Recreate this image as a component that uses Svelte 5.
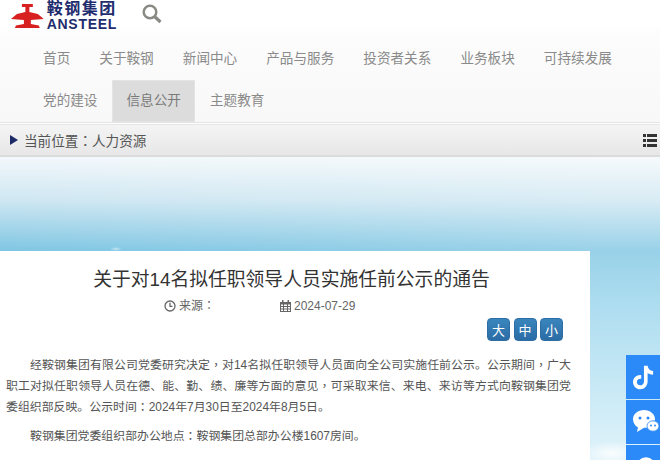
<script>
  const nav = ['首页','关于鞍钢','新闻中心','产品与服务','投资者关系','业务板块','可持续发展','党的建设','信息公开','主题教育'];
</script>

<div class="page">
  <header class="top">
    <div class="logo">
      <svg class="mark" width="36" height="26" viewBox="0 0 36 26">
        <path fill="#d7201f" d="M12 1h11v3h-3.500v5l8.500 2 6 5-13 1v4l8 1.500 1 2.500H5l1-2.500 8-1.500v-4L1 16l6-5 8.500-2V4H12z"/>
      </svg>
      <div class="logotext">
        <span class="cn">鞍钢集团</span>
        <span class="en">ANSTEEL</span>
      </div>
    </div>
    <svg class="search" width="20" height="20" viewBox="0 0 20 20" fill="none" stroke="#8a8a84">
      <circle cx="8" cy="8" r="6.300" stroke-width="2.500"/>
      <path d="M12.500 12.500l6 5.500" stroke-width="3.200"/>
    </svg>
  </header>

  <nav class="nav">
    {#each nav as item, i}
      <span class="item" class:second={i > 6} class:active={item === '信息公开'}>{item}</span>
    {/each}
  </nav>

  <div class="crumb">
    <span class="here"><i class="tri"></i><span>当前位置<span class="mid">：</span>人力资源</span></span>
    <svg width="14" height="13" viewBox="0 0 14 13" fill="#333">
      <path d="M0 0h3v3H0zM4 0h10v3H4zM0 5h3v3H0zM4 5h10v3H4zM0 10h3v3H0zM4 10h10v3H4z"/>
    </svg>
  </div>

  <main class="sky">
    <article class="card">
      <h1>关于对14名拟任职领导人员实施任前公示的通告</h1>
      <div class="meta">
        <span class="src">
          <svg width="12" height="12" viewBox="0 0 12 12" fill="none" stroke="#666" stroke-width="1.300">
            <circle cx="6" cy="6" r="5"/><path d="M6 2.800V6.300H8.500"/>
          </svg>
          <span>来源<span class="mid">：</span></span>
        </span>
        <span class="date">
          <svg width="11" height="12" viewBox="0 0 11 12" fill="#666">
            <path d="M0 2h2V0h1.500v2h4V0H9v2h2v10H0zM1 4.500v1.500h2V4.500zM4 4.500v1.500h3V4.500zM8 4.500v1.500h2V4.500zM1 7v1.500h2V7zM4 7v1.500h3V7zM8 7v1.500h2V7zM1 9.500V11h2V9.500zM4 9.500V11h3V9.500zM8 9.500V11h2V9.500z"/>
          </svg>
          2024-07-29
        </span>
      </div>
      <div class="sizes">
        <button>大</button><button>中</button><button>小</button>
      </div>
      <p>
        <span class="ln first">经鞍钢集团有限公司党委研究决定<span class="mid">，</span>对14名拟任职领导人员面向全公司实施任前公示。公示期间<span class="mid">，</span>广大</span>
        <span class="ln">职工对拟任职领导人员在德、能、勤、绩、廉等方面的意见<span class="mid">，</span>可采取来信、来电、来访等方式向鞍钢集团党</span>
        <span class="tail">委组织部反映。公示时间<span class="mid">：</span>2024年7月30日至2024年8月5日。</span>
      </p>
      <p><span class="tail first">鞍钢集团党委组织部办公地点<span class="mid">：</span>鞍钢集团总部办公楼1607房间。</span></p>
    </article>

    <aside class="side">
      <div class="sbtn">
        <svg width="21" height="25" viewBox="0 0 23 26" fill="#fff">
          <path d="M12 0h4c.4 3.300 2.600 5.500 6 5.800v4.200c-2.300 0-4.300-.7-6-1.900v9.400c0 4.700-3.500 8.500-8 8.500S0 22.400 0 18c0-4.800 4.200-8.400 9-7.800v4.400c-2.500-.6-4.800 1-4.800 3.300 0 2.100 1.700 3.700 3.700 3.700 2.200 0 4.100-1.700 4.100-4z"/>
        </svg>
      </div>
      <div class="sbtn">
        <svg width="26" height="24" viewBox="0 0 26 24">
          <path fill="#fff" d="M11 0c6 0 11 4 11 9.200 0 .6 0 1-.2 1.600-3.700-.6-6.800 2-6.800 5.200 0 .6.100 1 .2 1.400-1.400.4-2.800.5-4.200.4L4 22l1-4.500C2 15.800 0 12.700 0 9.200 0 4 5 0 11 0z"/>
          <circle cx="7" cy="8" r="1.500" fill="#2b8af7"/><circle cx="15" cy="8" r="1.500" fill="#2b8af7"/>
          <ellipse cx="20" cy="16" rx="6" ry="5.200" fill="#fff" stroke="#2b8af7" stroke-width=".8"/>
          <circle cx="18" cy="15.500" r="1" fill="#2b8af7"/><circle cx="22" cy="15.500" r="1" fill="#2b8af7"/>
        </svg>
      </div>
      <div class="sbtn">
        <svg width="26" height="24" viewBox="0 0 26 24" fill="none" stroke="#fff" stroke-width="3">
          <path d="M6 8a8 8 0 0 1 14 0"/>
        </svg>
      </div>
    </aside>
  </main>
</div>

<style>
  :global(body) {
    margin: 0;
    overflow: hidden;
    background: #fff;
  }
  .page {
    width: 660px;
    height: 460px;
    overflow: hidden;
    font-family: "Liberation Sans", "Noto Sans CJK SC", sans-serif;
    display: flex;
    flex-direction: column;
  }
  .top {
    height: 36px;
    flex: none;
    display: flex;
    align-items: flex-start;
    padding-left: 10px;
    background: linear-gradient(#fff 24px, #fcfcfc);
  }
  .logo {
    display: flex;
    align-items: flex-start;
    gap: 1px;
    width: 107px;
  }
  .mark {
    margin-top: 3px;
  }
  .logotext {
    display: flex;
    flex-direction: column;
    color: #1f2d6e;
    font-weight: 700;
    line-height: 1;
    padding-top: 1px;
  }
  .cn {
    font-size: 16px;
    letter-spacing: 1.500px;
    height: 16px;
  }
  .en {
    font-size: 14px;
    letter-spacing: 0.700px;
    height: 13px;
    margin-top: 0;
  }
  .search {
    margin: 4px 0 0 25px;
  }
  .nav {
    flex: none;
    display: flex;
    flex-wrap: wrap;
    padding-left: 28.500px;
    background: linear-gradient(#fcfcfc, #f8f8f8);
    height: 86px;
    align-content: flex-start;
    border-bottom: 1px solid #e3e3e3;
  }
  .item {
    padding: 0 14.550px;
    height: 44px;
    line-height: 45px;
    font-size: 13.600px;
    color: #8a8a8a;
    white-space: nowrap;
  }
  .item.second {
    height: 42px;
    line-height: 41px;
  }
  .item.active {
    background: #dcdcdc;
    color: #7a7a7a;
    box-shadow: inset 0 0 0 1px #e4e4e4;
  }
  .crumb {
    flex: none;
    margin-top: 1px;
    height: 33px;
    box-sizing: border-box;
    display: flex;
    align-items: center;
    justify-content: space-between;
    padding: 0 3px 0 10px;
    background: linear-gradient(#f4f4f4, #e7e7e7);
    border-top: 1px solid #e6e6e6;
    border-bottom: 2px solid #dbdbdb;
    font-size: 13.600px;
    color: #555;
  }
  .here {
    display: flex;
    align-items: center;
  }
  .mid {
    font-family: "Noto Sans CJK TC", sans-serif;
    line-height: 0;
  }
  .tri {
    width: 0;
    height: 0;
    margin-right: 6px;
    border-left: 8px solid #1c2a66;
    border-top: 5.500px solid transparent;
    border-bottom: 5.500px solid transparent;
  }
  .sky {
    flex: 1;
    position: relative;
    background:
      radial-gradient(ellipse 30px 12px at 612px 296px, rgba(255,255,255,.85), transparent),
      radial-gradient(ellipse 6px 2px at 116px 92px, rgba(255,255,255,.5), transparent),
      linear-gradient(90deg, rgba(255,255,255,0) 0, rgba(255,255,255,.2) 600px),
      linear-gradient(#f3f8fb 0, #cfe7f2 43px, #7fc6e3 94px, #9ad5ec 150px, #bfe5f4 240px, #d8f0f9 303px);
  }
  .card {
    position: absolute;
    left: 0;
    top: 94px;
    width: 590px;
    height: 300px;
    box-sizing: border-box;
    background: #fff;
    padding: 0 19px 0 6px;
    color: #555;
  }
  h1 {
    margin: 15px 0 0;
    font-size: 18.800px;
    line-height: 28px;
    font-weight: 400;
    color: #333;
    text-align: center;
    padding-left: 6px;
    white-space: nowrap;
  }
  .meta {
    display: flex;
    font-size: 12px;
    line-height: 18px;
    margin-top: 3px;
    color: #666;
    padding-left: 158px;
  }
  .meta > span {
    display: flex;
    align-items: center;
    gap: 3px;
  }
  .src {
    width: 116px;
  }
  .sizes {
    display: flex;
    justify-content: flex-end;
    gap: 3.500px;
    margin-top: 3px;
    padding-right: 8px;
  }
  .sizes button {
    width: 23px;
    height: 23px;
    padding: 0;
    border: 1px solid #2e6da4;
    border-radius: 4px;
    background: linear-gradient(#3a85bd, #2b6ca5);
    color: #fff;
    font-size: 13px;
    font-family: inherit;
  }
  p {
    margin: 0 0 8px;
    font-size: 11.900px;
    line-height: 21px;
  }
  .sizes + p {
    margin-top: 14px;
  }
  .ln {
    display: block;
    text-align: justify;
    text-align-last: justify;
  }
  .tail {
    display: block;
  }
  .first {
    text-indent: 24px;
  }
  .side {
    position: absolute;
    left: 626px;
    top: 198px;
    width: 34px;
  }
  .sbtn {
    height: 44px;
    margin-bottom: 1px;
    background: #2b8af7;
    display: flex;
    align-items: center;
    padding-left: 7px;
  }
</style>
